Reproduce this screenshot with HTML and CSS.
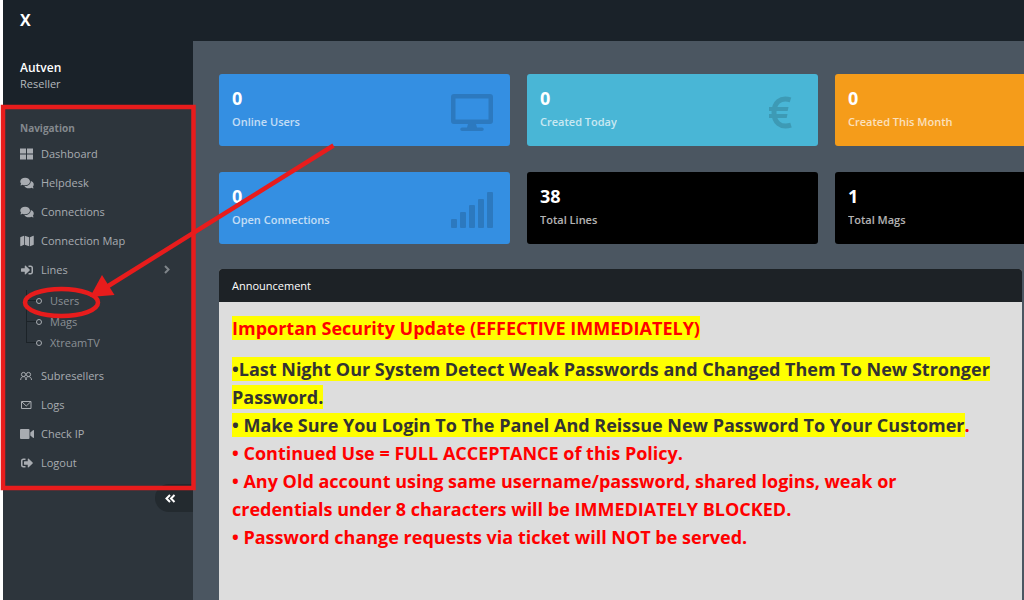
FILE: index.html
```html
<!DOCTYPE html>
<html lang="en">
<head>
  <meta charset="UTF-8" />
  <meta name="viewport" content="width=device-width, initial-scale=1.0"/>
  <title>Dashboard</title>
  <link rel="stylesheet" href="styles.css">
</head>
<body>
  <header class="topbar">
    <a href="#" class="brand">X</a>
  </header>

  <div class="layout">
    <aside class="sidebar">
      <div class="profile">
        <div class="profile-name">Autven</div>
        <div class="profile-role">Reseller</div>
      </div>

      <nav class="menu" aria-label="Main navigation">
        <div class="menu-header">Navigation</div>
        <a href="#" class="menu-item">
          <svg class="icon" viewBox="0 0 14 12"><path d="M0 0.5h6v5H0zM7 0.5h6v5H7zM0 6.5h6v5H0zM7 6.5h6v5H7z"/></svg>
          Dashboard
        </a>
        <a href="#" class="menu-item">
          <svg class="icon" viewBox="0 0 576 512"><path d="M416 192c0-88.4-93.1-160-208-160S0 103.6 0 192c0 34.3 14.1 65.9 38 92-13.4 30.2-35.5 54.2-35.8 54.5-2.2 2.3-2.8 5.7-1.5 8.7S4.8 352 8 352c36.6 0 66.9-12.3 88.7-25 32.2 15.7 70.3 25 111.3 25 114.9 0 208-71.6 208-160zm122 220c23.9-26 38-57.7 38-92 0-66.9-53.5-124.2-129.3-148.1.9 6.6 1.3 13.3 1.3 20.1 0 105.9-107.7 192-240 192-10.8 0-21.3-.8-31.7-1.9C207.8 439.6 281.8 480 368 480c41 0 79.1-9.2 111.3-25 21.8 12.7 52.1 25 88.7 25 3.2 0 6.1-1.9 7.3-4.8 1.3-2.9.7-6.3-1.5-8.7-.3-.3-22.4-24.2-35.8-54.5z"/></svg>
          Helpdesk
        </a>
        <a href="#" class="menu-item">
          <svg class="icon" viewBox="0 0 576 512"><path d="M416 192c0-88.4-93.1-160-208-160S0 103.6 0 192c0 34.3 14.1 65.9 38 92-13.4 30.2-35.5 54.2-35.8 54.5-2.2 2.3-2.8 5.7-1.5 8.7S4.8 352 8 352c36.6 0 66.9-12.3 88.7-25 32.2 15.7 70.3 25 111.3 25 114.9 0 208-71.6 208-160zm122 220c23.9-26 38-57.7 38-92 0-66.9-53.5-124.2-129.3-148.1.9 6.6 1.3 13.3 1.3 20.1 0 105.9-107.7 192-240 192-10.8 0-21.3-.8-31.7-1.9C207.8 439.6 281.8 480 368 480c41 0 79.1-9.2 111.3-25 21.8 12.7 52.1 25 88.7 25 3.2 0 6.1-1.9 7.3-4.8 1.3-2.9.7-6.3-1.5-8.7-.3-.3-22.4-24.2-35.8-54.5z"/></svg>
          Connections
        </a>
        <a href="#" class="menu-item">
          <svg class="icon" viewBox="0 0 576 512"><path d="M0 117.66v346.32c0 11.32 11.43 19.06 21.94 14.86L160 416V32L20.12 87.95A32.006 32.006 0 0 0 0 117.66zM192 416l192 64V96L192 32v384zM554.06 33.16L416 96v384l139.88-55.95A31.996 31.996 0 0 0 576 394.34V48.02c0-11.32-11.43-19.06-21.94-14.86z"/></svg>
          Connection Map
        </a>
        <a href="#" class="menu-item">
          <svg class="icon" viewBox="0 0 512 512"><path d="M416 448h-84c-6.600 0-12-5.400-12-12v-40c0-6.600 5.400-12 12-12h84c17.700 0 32-14.300 32-32V160c0-17.700-14.300-32-32-32h-84c-6.600 0-12-5.400-12-12V76c0-6.600 5.400-12 12-12h84c53 0 96 43 96 96v192c0 53-43 96-96 96zm-47-209L201 71c-15-15-41-4.500-41 17v96H24c-13.300 0-24 10.700-24 24v96c0 13.300 10.700 24 24 24h136v96c0 21.500 26 32 41 17l168-168c9.300-9.400 9.300-24.600 0-34z"/></svg>
          Lines
          <svg class="caret" viewBox="0 0 6 9"><path d="M1 1l3.500 3.500L1 8"/></svg>
        </a>
        <div class="submenu">
          <a href="#" class="submenu-item">Users</a>
          <a href="#" class="submenu-item">Mags</a>
          <a href="#" class="submenu-item">XtreamTV</a>
        </div>
        <a href="#" class="menu-item">
          <svg class="icon icon-line" viewBox="0 0 14 12"><circle cx="3.500" cy="4.500" r="2.100"/><circle cx="8.500" cy="4.500" r="2.100"/><path d="M0.700 10c0-2 1-3.400 2.800-3.400S6 8 6 10M6 10c0-2 0.800-3.400 2.500-3.400S11.500 8 11.500 10"/></svg>
          Subresellers
        </a>
        <a href="#" class="menu-item">
          <svg class="icon icon-line" viewBox="0 0 14 12"><path d="M1.500 2.500h9.500v7H1.500zM2 3l4.250 4L10.500 3"/></svg>
          Logs
        </a>
        <a href="#" class="menu-item">
          <svg class="icon" viewBox="0 0 14 12"><path d="M1 1h7.500a1 1 0 0 1 1 1v8a1 1 0 0 1-1 1H1a1 1 0 0 1-1-1V2a1 1 0 0 1 1-1zM10.300 4.500L13 2.300q1-.6 1 .4v6.600q0 1-1 .4l-2.700-2.200z"/></svg>
          Check IP
        </a>
        <a href="#" class="menu-item">
          <svg class="icon" viewBox="0 0 512 512"><path d="M497 273L329 441c-15 15-41 4.500-41-17v-96H152c-13.300 0-24-10.700-24-24v-96c0-13.300 10.700-24 24-24h136V88c0-21.400 25.900-32 41-17l168 168c9.300 9.400 9.300 24.600 0 34zM192 436v-40c0-6.600-5.400-12-12-12H96c-17.700 0-32-14.300-32-32V160c0-17.700 14.300-32 32-32h84c6.600 0 12-5.400 12-12V76c0-6.600-5.400-12-12-12H96c-53 0-96 43-96 96v192c0 53 43 96 96 96h84c6.600 0 12-5.400 12-12z"/></svg>
          Logout
        </a>
      </nav>

      <button type="button" class="minify" aria-label="Collapse sidebar">
        <svg viewBox="0 0 11 9"><path d="M5 1L1.500 4.500 5 8M9.500 1L6 4.500 9.500 8"/></svg>
      </button>
    </aside>

    <main>
      <div class="stats">
        <div class="stat blue">
          <div>
            <div class="stat-number">0</div>
            <div class="stat-label">Online Users</div>
          </div>
          <svg class="stat-icon" viewBox="0 0 42 40"><path fill-rule="evenodd" d="M3 1h36a3 3 0 0 1 3 3v24a3 3 0 0 1-3 3H25l1 3.500h5a1.500 1.500 0 0 1 0 3.500H11a1.500 1.500 0 0 1 0-3.500h5l1-3.500H3a3 3 0 0 1-3-3V4a3 3 0 0 1 3-3zM4.500 5.500v21h33v-21z"/></svg>
        </div>
        <div class="stat cyan">
          <div>
            <div class="stat-number">0</div>
            <div class="stat-label">Created Today</div>
          </div>
          <svg class="stat-icon" viewBox="0 0 42 40"><path class="euro" d="M31.500 6.800C21 3.500 15 10 15 19.500S21 35.500 32 32.200"/><path d="M10 14h19.500l-.8 4H10zM10 21h18.500l-.8 4H10z"/></svg>
        </div>
        <div class="stat orange">
          <div>
            <div class="stat-number">0</div>
            <div class="stat-label">Created This Month</div>
          </div>
        </div>
        <div class="stat blue">
          <div>
            <div class="stat-number">0</div>
            <div class="stat-label">Open Connections</div>
          </div>
          <svg class="stat-icon" viewBox="0 0 42 40"><rect x="0" y="28" width="6" height="9" rx="1"/><rect x="9" y="21" width="6" height="16" rx="1"/><rect x="18" y="14" width="6" height="23" rx="1"/><rect x="27" y="8" width="6" height="29" rx="1"/><rect x="36" y="1" width="6" height="36" rx="1"/></svg>
        </div>
        <div class="stat black">
          <div>
            <div class="stat-number">38</div>
            <div class="stat-label">Total Lines</div>
          </div>
        </div>
        <div class="stat black">
          <div>
            <div class="stat-number">1</div>
            <div class="stat-label">Total Mags</div>
          </div>
        </div>
      </div>

      <section class="panel">
        <h4 class="panel-heading">Announcement</h4>
        <div class="panel-body">
          <p><mark class="red">Importan Security Update (EFFECTIVE IMMEDIATELY)</mark></p>
          <p class="red">
            <mark>•Last Night Our System Detect Weak Passwords and Changed Them To New Stronger Password.</mark><br>
            <mark>• Make Sure You Login To The Panel And Reissue New Password To Your Customer</mark>.<br>
            • Continued Use = FULL ACCEPTANCE of this Policy.<br>
            • Any Old account using same username/password, shared logins, weak or credentials under 8 characters will be IMMEDIATELY BLOCKED.<br>
            • Password change requests via ticket will NOT be served.
          </p>
        </div>
      </section>
    </main>
  </div>

  <!-- Red markings drawn over the page -->
  <svg class="markup" width="340" height="500" viewBox="0 0 340 500" aria-hidden="true">
    <rect x="3" y="107" width="190.500" height="381"/>
    <ellipse cx="61.500" cy="302.500" rx="36.500" ry="13.500"/>
    <path d="M333.500 145.500L105 288"/>
    <path class="head" d="M90 297l12-22 12.500 20z"/>
  </svg>
</body>
</html>
```
FILE: styles.css
```css
/* Basic reset */
* {
  margin: 0;
  padding: 0;
  box-sizing: border-box;
}

body {
  font-family: "Open Sans", "Liberation Sans", sans-serif;
  font-size: 11px;
  background-color: white;
  padding-left: 3px;
  height: 100vh;
  display: flex;
  flex-direction: column;
  overflow: hidden;
  position: relative;
}

a {
  color: inherit;
  text-decoration: none;
}

.topbar {
  background-color: #1a2229;
  height: 41px;
  flex: none;
  display: flex;
  align-items: center;
  padding: 0 17px 2px;
}

.brand {
  color: white;
  font-size: 16px;
  font-weight: bold;
}

.layout {
  flex: 1;
  display: flex;
  min-height: 0;
}

/* Sidebar */
.sidebar {
  width: 190px;
  flex: none;
  background-color: #2d353c;
  display: flex;
  flex-direction: column;
}

.profile {
  background-color: #1a2229;
  color: #b4b9bd;
  height: 66px;
  padding: 18px 17px 0;
}

.profile-name {
  color: white;
  font-size: 12px;
  font-weight: 600;
  line-height: 18px;
}

.profile-role {
  line-height: 14px;
}

.menu {
  color: #a8acb1;
  padding-top: 11px;
}

.menu-header {
  color: #84898e;
  font-size: 10px;
  font-weight: bold;
  line-height: 20px;
  padding: 0 17px;
}

.menu-item {
  display: flex;
  align-items: center;
  gap: 7px;
  height: 29px;
  padding: 0 17px;
}

.menu-header + .menu-item {
  margin-top: 1px;
}

.icon {
  width: 14px;
  height: 12px;
  fill: currentColor;
}

.icon-line {
  fill: none;
  stroke: currentColor;
}

.caret {
  width: 6px;
  height: 9px;
  margin-left: auto;
  margin-right: 6px;
  fill: none;
  stroke: #7f858a;
  stroke-width: 2;
}

.submenu {
  color: #8b9095;
  padding: 6px 0 8px;
  margin-left: 23px;
}

.submenu-item {
  display: flex;
  align-items: center;
  height: 21px;
  position: relative;
  /* vertical branch of the tree */
  background: linear-gradient(#1c2328, #1c2328) no-repeat 0 0 / 1px 100%;
}

.submenu-item:last-child {
  background-size: 1px 50%;
}

.submenu-item::before {
  content: "";
  width: 10px;
  height: 1px;
  margin-right: 14px;
  background-color: #1c2328;
}

/* bullet ring */
.submenu-item::after {
  content: "";
  box-sizing: border-box;
  position: absolute;
  left: 10px;
  width: 6px;
  height: 6px;
  border: 1px solid #a8acb1;
  border-radius: 50%;
}

.minify {
  align-self: flex-end;
  width: 38px;
  height: 28px;
  margin-top: 7px;
  padding-right: 8px;
  border: none;
  border-radius: 14px 0 0 14px;
  background-color: #232a2f;
  cursor: pointer;
}

.minify svg {
  width: 11px;
  height: 9px;
  fill: none;
  stroke: white;
  stroke-width: 2;
}

/* Content */
main {
  flex: 1;
  min-width: 0;
  background-color: #4b5661;
  padding: 33px 2px 0 26px;
  display: flex;
  flex-direction: column;
}

.stats {
  display: grid;
  grid-template-columns: repeat(3, minmax(291px, 1fr));
  gap: 26px 17px;
  margin-bottom: 25px;
}

.stat {
  display: flex;
  justify-content: space-between;
  align-items: flex-end;
  padding: 12px 17px 13px 13px;
  border-radius: 3px;
  color: white;
}

.stat-number {
  font-size: 18px;
  font-weight: bold;
  line-height: 25px;
}

.stat-label {
  font-weight: 600;
  line-height: 22px;
  opacity: 0.7;
}

.stat-icon {
  width: 42px;
  height: 40px;
  opacity: 0.15;
}

.euro {
  fill: none;
  stroke: black;
  stroke-width: 5;
}

.blue {
  background-color: #348fe2;
}

.cyan {
  background-color: #49b6d6;
}

.orange {
  background-color: #f59c1a;
}

.black {
  background-color: black;
}

.panel {
  flex: 1;
  background-color: #dddddd;
  border-radius: 3px 3px 0 0;
  overflow: hidden;
}

.panel-heading {
  background-color: #1d2226;
  color: white;
  font-size: 11px;
  font-weight: normal;
  line-height: 33px;
  padding: 0 13px;
}

.panel-body {
  padding: 12px 26px 13px 13px;
  font-size: 18px;
  font-weight: bold;
  line-height: 28px;
}

.panel-body p {
  margin-bottom: 13px;
}

mark {
  background-color: yellow;
  color: #333;
}

.red {
  color: red;
}

/* Annotations */
.markup {
  position: absolute;
  top: 0;
  left: 0;
  fill: none;
  stroke: #e81c1c;
  stroke-width: 4.5;
  pointer-events: none;
}

.head {
  fill: #e81c1c;
  stroke: none;
}
```
